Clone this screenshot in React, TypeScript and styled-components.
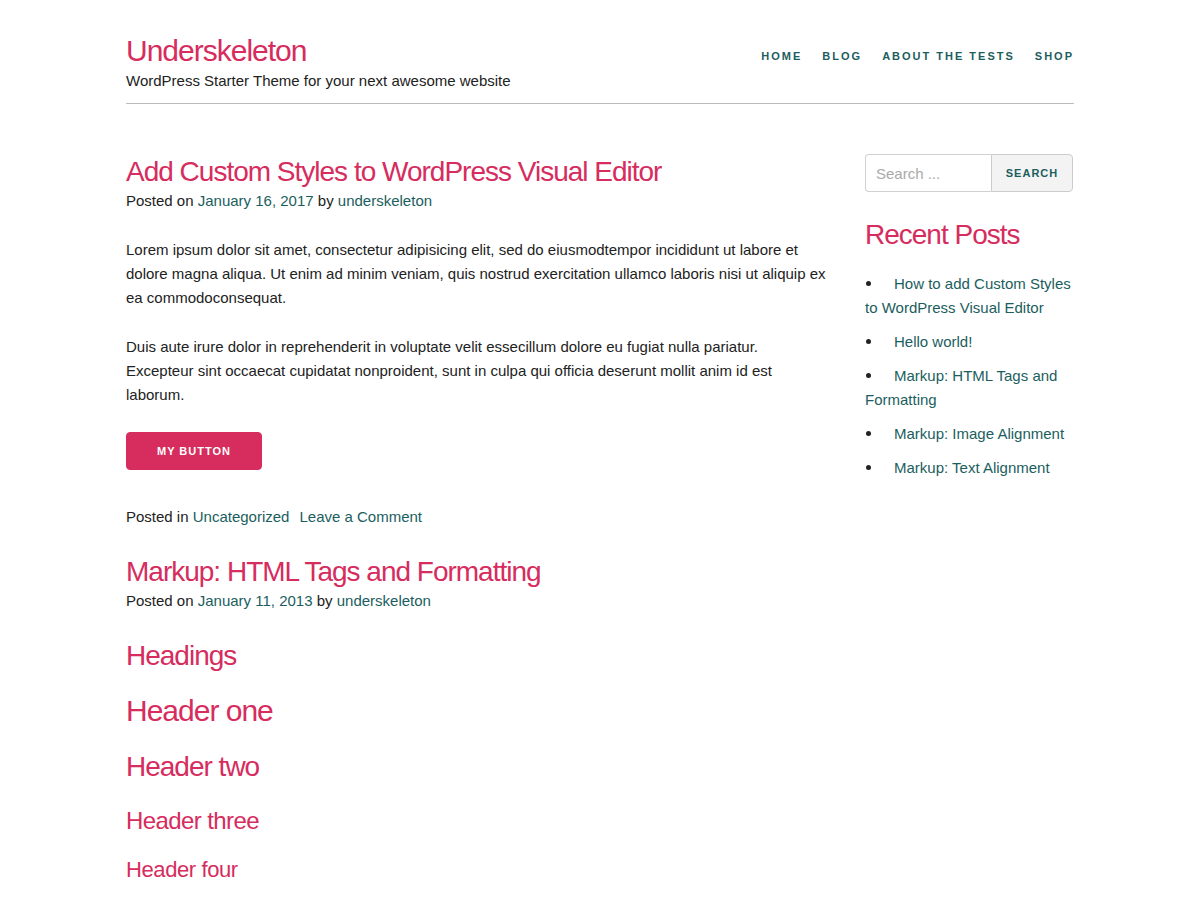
import React from "react";
import styled, { createGlobalStyle } from "styled-components";

const PINK = "#d62c5e";
const TEAL = "#1b5e5e";

const Global = createGlobalStyle`
  html, body { margin: 0; padding: 0; background: #fff; }
  body {
    font-family: "Liberation Sans", Arial, sans-serif;
    font-size: 15px;
    line-height: 24px;
    color: #222;
  }
  * { box-sizing: border-box; }
`;

const Container = styled.div`
  max-width: 948px;
  margin: 0 auto;
`;

const Header = styled.header`
  display: flex;
  justify-content: space-between;
  align-items: flex-start;
  padding: 33px 0 10px;
  border-bottom: 1px solid #bbb;
`;

const Branding = styled.div`
  display: flex;
  flex-direction: column;
`;

const SiteTitle = styled.a`
  font-size: 30px;
  line-height: 36px;
  letter-spacing: -1px;
  color: ${PINK};
  text-decoration: none;
`;

const Tagline = styled.p`
  margin: 0;
  font-size: 15px;
  line-height: 24px;
`;

const Nav = styled.nav`
  display: flex;
  gap: 20px;
  margin-top: 11px;
`;

const NavLink = styled.a`
  font-size: 11px;
  line-height: 24px;
  font-weight: 700;
  letter-spacing: 2px;
  text-transform: uppercase;
  color: ${TEAL};
  text-decoration: none;
`;

const Layout = styled.div`
  display: grid;
  grid-template-columns: 701px 208px;
  column-gap: 38px;
  padding-top: 50px;
`;

const Main = styled.main`
  min-width: 0;
  padding-top: 1px;
`;

const Article = styled.article`
  margin-bottom: 26px;
`;

const Heading = styled.h2<{ $size: number; $lh: number; $ls?: number; $mb?: number }>`
  margin: 0 0 ${(p) => (p.$mb ?? 20)}px;
  font-weight: 400;
  font-size: ${(p) => p.$size}px;
  line-height: ${(p) => p.$lh}px;
  letter-spacing: ${(p) => (p.$ls ?? -1)}px;
  color: ${PINK};
`;

const Meta = styled.div`
  margin-bottom: 25px;
`;

const Link = styled.a`
  color: ${TEAL};
  text-decoration: none;
`;

const Para = styled.p`
  margin: 0 0 25px;
`;

const ButtonRow = styled.div`
  margin-bottom: 35px;
`;

const PrimaryButton = styled.a`
  display: inline-flex;
  align-items: center;
  height: 38px;
  padding: 0 30px;
  border: 1px solid ${PINK};
  border-radius: 4px;
  background: ${PINK};
  color: #fff;
  font-size: 11px;
  font-weight: 700;
  letter-spacing: 1px;
  text-transform: uppercase;
  text-decoration: none;
`;

const EntryFooter = styled.footer`
  display: flex;
  gap: 10px;
`;

const Sidebar = styled.aside`
  min-width: 0;
`;

const SearchForm = styled.form`
  display: flex;
  height: 38px;
  margin-bottom: 25px;
`;

const SearchInput = styled.input`
  width: 126px;
  height: 38px;
  padding: 6px 10px;
  border: 1px solid #d1d1d1;
  border-right: none;
  border-radius: 4px 0 0 4px;
  font-family: inherit;
  font-size: 15px;
  color: #222;
  outline: none;
  &::placeholder { color: #aaa; }
`;

const SearchButton = styled.button`
  flex: 1;
  height: 38px;
  padding: 0;
  border: 1px solid #ccc;
  border-radius: 0 4px 4px 0;
  background: #f3f3f3;
  color: ${TEAL};
  font-family: inherit;
  font-size: 11px;
  font-weight: 700;
  letter-spacing: 1px;
  text-transform: uppercase;
  cursor: pointer;
`;

const RecentList = styled.ul`
  list-style: none;
  margin: 0;
  padding: 0;
`;

const RecentItem = styled.li`
  margin-bottom: 10px;
  &::before {
    content: "";
    display: inline-block;
    width: 5px;
    height: 5px;
    margin: 0 23px 0 1px;
    border-radius: 50%;
    background: #222;
    vertical-align: 3px;
  }
`;

const recent = [
  "How to add Custom Styles to WordPress Visual Editor",
  "Hello world!",
  "Markup: HTML Tags and Formatting",
  "Markup: Image Alignment",
  "Markup: Text Alignment",
];

export default function App() {
  return (
    <>
      <Global />
      <Container>
        <Header>
          <Branding>
            <SiteTitle href="#">Underskeleton</SiteTitle>
            <Tagline>WordPress Starter Theme for your next awesome website</Tagline>
          </Branding>
          <Nav>
            <NavLink href="#">Home</NavLink>
            <NavLink href="#">Blog</NavLink>
            <NavLink href="#">About The Tests</NavLink>
            <NavLink href="#">Shop</NavLink>
          </Nav>
        </Header>
        <Layout>
          <Main>
            <Article>
              <Heading $size={28} $lh={34} $mb={0}>
                Add Custom Styles to WordPress Visual Editor
              </Heading>
              <Meta>
                Posted on <Link href="#">January 16, 2017</Link> by{" "}
                <Link href="#">underskeleton</Link>
              </Meta>
              <Para>
                Lorem ipsum dolor sit amet, consectetur adipisicing elit, sed do
                eiusmodtempor incididunt ut labore et dolore magna aliqua. Ut enim ad
                minim veniam, quis nostrud exercitation ullamco laboris nisi ut aliquip
                ex ea commodoconsequat.
              </Para>
              <Para>
                Duis aute irure dolor in reprehenderit in voluptate velit essecillum
                dolore eu fugiat nulla pariatur. Excepteur sint occaecat cupidatat
                nonproident, sunt in culpa qui officia deserunt mollit anim id est
                laborum.
              </Para>
              <ButtonRow>
                <PrimaryButton href="#">My Button</PrimaryButton>
              </ButtonRow>
              <EntryFooter>
                <span>
                  Posted in <Link href="#">Uncategorized</Link>
                </span>
                <Link href="#">Leave a Comment</Link>
              </EntryFooter>
            </Article>
            <Article>
              <Heading $size={28} $lh={34} $mb={0}>
                Markup: HTML Tags and Formatting
              </Heading>
              <Meta>
                Posted on <Link href="#">January 11, 2013</Link> by{" "}
                <Link href="#">underskeleton</Link>
              </Meta>
              <Heading $size={28} $lh={36} $mb={19}>Headings</Heading>
              <Heading as="h1" $size={30} $lh={36}>Header one</Heading>
              <Heading $size={28} $lh={36}>Header two</Heading>
              <Heading as="h3" $size={24} $lh={31} $ls={-0.6}>Header three</Heading>
              <Heading as="h4" $size={22} $lh={28} $ls={-0.4}>Header four</Heading>
            </Article>
          </Main>
          <Sidebar>
            <SearchForm onSubmit={(e) => e.preventDefault()}>
              <SearchInput type="search" placeholder="Search ..." />
              <SearchButton type="submit">Search</SearchButton>
            </SearchForm>
            <Heading $size={28} $lh={35}>Recent Posts</Heading>
            <RecentList>
              {recent.map((t) => (
                <RecentItem key={t}>
                  <Link href="#">{t}</Link>
                </RecentItem>
              ))}
            </RecentList>
          </Sidebar>
        </Layout>
      </Container>
    </>
  );
}
